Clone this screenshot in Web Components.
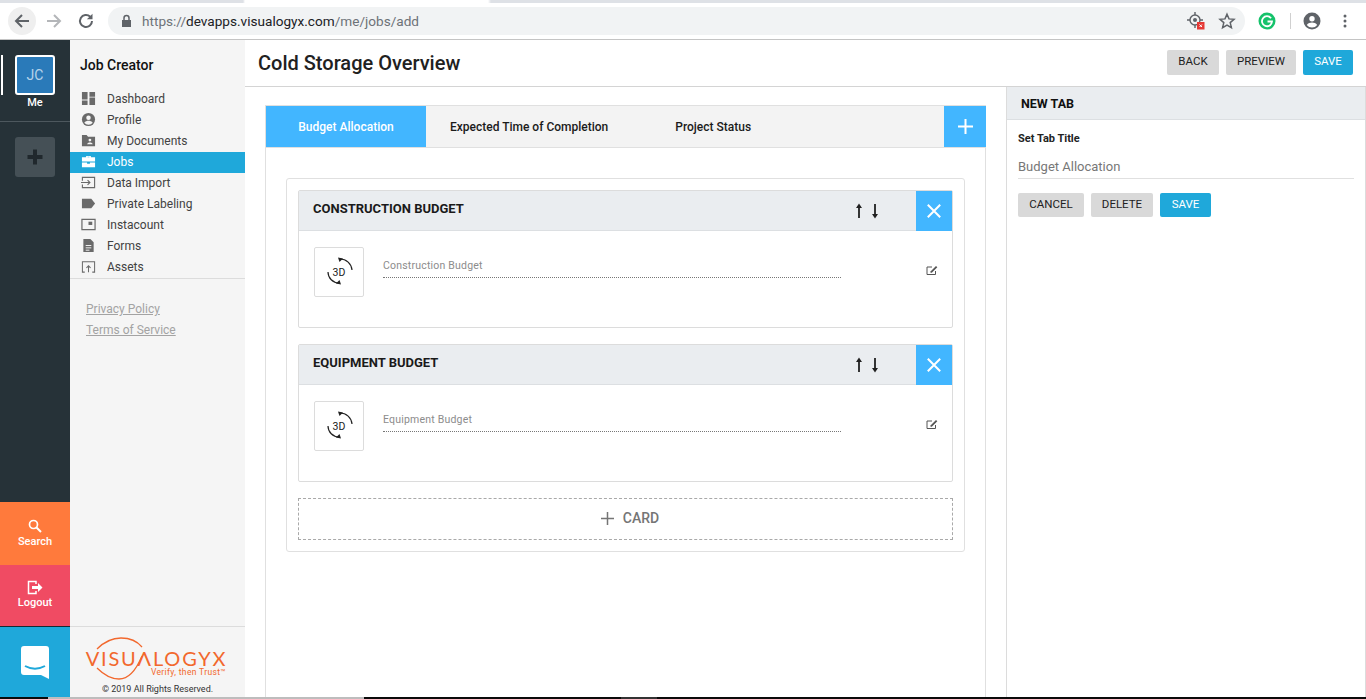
<!DOCTYPE html>
<html>
<head>
<meta charset="utf-8">
<title>Cold Storage Overview</title>
<style>
  html, body { margin: 0; height: 100%; overflow: hidden; background: #fff; }
  body { font-family: Roboto, "Liberation Sans", sans-serif; display: flex; flex-direction: column; height: 699px; }
  .app { display: flex; flex: 1; min-height: 0; }
  .work { flex: 1; display: flex; flex-direction: column; min-width: 0; }
  .columns { flex: 1; display: flex; min-height: 0; }
</style>
</head>
<body>
  <browser-bar></browser-bar>
  <div class="app">
    <app-rail></app-rail>
    <side-nav></side-nav>
    <div class="work">
      <page-header></page-header>
      <div class="columns">
        <tab-panel>
          <form-card title="CONSTRUCTION BUDGET" label="Construction Budget"></form-card>
          <form-card title="EQUIPMENT BUDGET" label="Equipment Budget"></form-card>
        </tab-panel>
        <tab-editor></tab-editor>
      </div>
    </div>
  </div>
  <task-strip></task-strip>

<script>
class uiButton extends HTMLElement {
  constructor(){
    super();
    this.attachShadow({mode:"open"});
    this.shadowRoot.innerHTML = `
      <style>
      :host { display: inline-flex; align-items: center; justify-content: center; box-sizing: border-box;
        height: 25px; background: #d9d9d9; color: #212121; border-radius: 2px;
        font-size: 11.5px; line-height: 1; padding-bottom: 2px; }
      :host([primary]) { background: #1fa8da; color: #fff; }
      :host([small]) { height: 24px; padding-bottom: 0; }
      </style>
      <slot></slot>`;
  }
}
customElements.define("ui-button", uiButton);

class browserBar extends HTMLElement {
  constructor(){
    super();
    this.attachShadow({mode:"open"});
    this.shadowRoot.innerHTML = `
      <style>
      :host { display: block; flex: none; height: 40px; box-sizing: border-box; border-bottom: 1px solid #c4c4c4; background: #fff; }
      .strip { height: 3px; background: linear-gradient(to right, #dee1e6 0, #dee1e6 243px, #fff 245px, #fff 488px, #dee1e6 491px); }
      .row { display: flex; align-items: center; height: 28px; margin-top: 4px; padding-left: 8px; }
      .back { width: 28px; height: 28px; border-radius: 50%; background: #efefef; display: flex; align-items: center; justify-content: center; }
      .nav { width: 32px; display: flex; justify-content: center; }
      .omni { margin-left: 6px; width: 1137px; height: 28px; border-radius: 14px; background: #f1f3f4; display: flex; align-items: center; box-sizing: border-box; padding-left: 12px; }
      .url { margin-left: 9px; font-size: 13.6px; color: #6d7278; flex: 1; white-space: nowrap; }
      .url b { font-weight: 400; color: #202124; }
      .end { display: flex; align-items: center; }
      .sep { width: 1px; height: 16px; background: #d0d0d0; margin: 0 12px 0 14px; }
      </style>
      <div class="strip"></div>
      <div class="row">
        <div class="back"><svg width="18" height="18" viewBox="0 0 18 18"><path d="M16 9H3.500M9 3L3 9l6 6" fill="none" stroke="#5f6368" stroke-width="2"/></svg></div>
        <div class="nav" style="margin-left:2px"><svg width="18" height="18" viewBox="0 0 18 18"><path d="M2 9h12.500M9 3l6 6-6 6" fill="none" stroke="#b4b6b9" stroke-width="2"/></svg></div>
        <div class="nav"><svg width="18" height="18" viewBox="0 0 18 18"><path d="M15 9a6 6 0 1 1-1.800-4.300" fill="none" stroke="#5f6368" stroke-width="2"/><path d="M15.500 1.700v5.600H9.900z" fill="#5f6368"/></svg></div>
        <div class="omni">
          <svg width="13" height="14" viewBox="0 0 13 14"><path d="M2 6h9v7H2z" fill="#5f6368"/><path d="M4 6V4a2.500 2.500 0 0 1 5 0v2" fill="none" stroke="#5f6368" stroke-width="1.500"/></svg>
          <div class="url">https://<b>devapps.visualogyx.com</b>/me/jobs/add</div>
          <svg width="18" height="18" viewBox="0 0 18 18" style="margin-right:13px"><circle cx="8" cy="8" r="5" fill="none" stroke="#5f6368" stroke-width="1.400"/><circle cx="8" cy="8" r="2" fill="#5f6368"/><path d="M8 0v3M8 13v3M0 8h3M13 8h3" stroke="#5f6368" stroke-width="1.400"/><rect x="10" y="10" width="7.500" height="7.500" fill="#e53935"/><path d="M12.500 12.500l2.500 2.500M15 12.500L12.500 15" stroke="#fff" stroke-width="1"/></svg>
          <svg width="18" height="18" viewBox="0 0 18 18" style="margin-right:9px"><path d="M9 2.200l2 4.700 5 .4-3.800 3.300 1.200 5L9 13l-4.400 2.600 1.200-5L2 7.300l5-.4z" fill="none" stroke="#5f6368" stroke-width="1.500"/></svg>
        </div>
        <div class="end">
          <svg width="18" height="18" viewBox="0 0 18 18" style="margin-left:13px"><circle cx="9" cy="9" r="8.500" fill="#15c26b"/><path d="M13 6.200A5 5 0 1 0 14 9.500H9.500" fill="none" stroke="#fff" stroke-width="1.800"/></svg>
          <div class="sep"></div>
          <svg width="18" height="18" viewBox="0 0 18 18"><circle cx="9" cy="9" r="8.500" fill="#5f6368"/><circle cx="9" cy="6.800" r="2.700" fill="#fff"/><path d="M3.800 13c1.200-2 3.300-2.600 5.200-2.600s4 .6 5.200 2.600a6.500 6.500 0 0 1-10.400 0z" fill="#fff"/></svg>
          <svg width="4" height="14" viewBox="0 0 4 14" style="margin-left:22px"><circle cx="2" cy="2" r="1.500" fill="#5f6368"/><circle cx="2" cy="7" r="1.500" fill="#5f6368"/><circle cx="2" cy="12" r="1.500" fill="#5f6368"/></svg>
        </div>
      </div>`;
  }
}
customElements.define("browser-bar", browserBar);

class appRail extends HTMLElement {
  constructor(){
    super();
    this.attachShadow({mode:"open"});
    this.shadowRoot.innerHTML = `
      <style>
      :host { display: flex; flex-direction: column; flex: none; width: 70px; background: #263238; color: #fff; font-size: 11px; font-weight: 500; text-align: center; }
      .me { height: 82px; box-sizing: border-box; padding-top: 15px; border-bottom: 1px solid #4d585e; position: relative; }
      .me::before { content: ""; position: absolute; left: 1px; top: 15px; width: 2px; height: 40px; background: #fff; }
      .avatar { width: 40px; height: 40px; box-sizing: border-box; margin: 0 auto; border: 2px solid #fff; border-radius: 3px; background: #2a7ab9; color: #b6d3ea; font-size: 14px; font-weight: 400; display: flex; align-items: center; justify-content: center; }
      .name { margin-top: 1px; line-height: 13px; }
      .add { width: 40px; height: 40px; margin: 15px auto 0; border-radius: 3px; background: #455056; display: flex; align-items: center; justify-content: center; }
      .grow { flex: 1; }
      .block { display: flex; flex-direction: column; align-items: center; }
      .search { height: 63px; background: #ff7a3c; padding-top: 17px; box-sizing: border-box; }
      .logout { height: 61px; background: #f04b63; padding-top: 15px; box-sizing: border-box; }
      .chat { height: 71px; background: #1fa8da; border-top: 1px solid #172a33; box-sizing: border-box; align-items: center; justify-content: center; }
      span { line-height: 14px; }
      </style>
      <div class="me">
        <div class="avatar">JC</div>
        <div class="name">Me</div>
      </div>
      <div class="add"><svg width="16" height="16" viewBox="0 0 16 16"><path d="M8 .5v15M.5 8h15" stroke="#20282d" stroke-width="4"/></svg></div>
      <div class="grow"></div>
      <div class="block search">
        <svg width="14" height="14" viewBox="0 0 14 14"><circle cx="5.500" cy="5.500" r="4" fill="none" stroke="#fff" stroke-width="1.700"/><path d="M8.500 8.500l4.500 4.500" stroke="#fff" stroke-width="2"/></svg>
        <span style="margin-top:2px">Search</span>
      </div>
      <div class="block logout">
        <svg width="16" height="15" viewBox="0 0 16 15"><path d="M9 4V1.500H1.500v12H9V11" fill="none" stroke="#fff" stroke-width="1.500"/><path d="M5 6h6V3l4.500 4.500L11 12V9H5z" fill="#fff"/></svg>
        <span style="margin-top:1px">Logout</span>
      </div>
      <div class="block chat">
        <svg width="28" height="33" viewBox="0 0 28 33"><path d="M3 0h22a3 3 0 0 1 3 3v30l-8-4H3a3 3 0 0 1-3-3V3a3 3 0 0 1 3-3z" fill="#fff"/><path d="M4 20c6 3.500 14 3.500 20 0" fill="none" stroke="#1fa8da" stroke-width="2"/></svg>
      </div>`;
  }
}
customElements.define("app-rail", appRail);

const navIcons = {
  dashboard: `<path d="M1 1h6v8H1zM1 10h6v5H1zM9 1h6v5H9zM9 7h6v8H9z" fill="currentColor"/>`,
  profile: `<circle cx="8" cy="8" r="7" fill="currentColor"/><circle cx="8" cy="6" r="2.400" fill="#f5f5f5"/><path d="M3.500 11.500c1-1.700 3-2.200 4.500-2.200s3.500.5 4.500 2.200a5.800 5.800 0 0 1-9 0z" fill="#f5f5f5"/>`,
  docs: `<path d="M1 2h5l1.500 2H15v10H1z" fill="currentColor"/><circle cx="9.500" cy="7.500" r="1.500" fill="#f5f5f5"/><path d="M6.500 12c.3-1.500 1.500-2 3-2s2.700.5 3 2z" fill="#f5f5f5"/>`,
  jobs: `<path d="M5.500 3.500V2h5v1.500H15V8H1V3.500zM7 3.500h2V3H7zM1 9h5.500v1.500h3V9H15v5H1z" fill="currentColor"/>`,
  data: `<path d="M1.500 6V2.500h13v11h-13V10" fill="none" stroke="currentColor" stroke-width="1.200"/><path d="M0 8h9M7 5.500L9.500 8 7 10.500" fill="none" stroke="currentColor" stroke-width="1.200"/>`,
  label: `<path d="M1 3h10l4 5-4 5H1z" fill="currentColor"/>`,
  insta: `<path d="M1 2.500h14v11H1z" fill="none" stroke="currentColor" stroke-width="1.300"/><rect x="8" y="5" width="4" height="3.500" fill="currentColor"/>`,
  forms: `<path d="M2.500 1H10l3.500 3.500V15h-11z" fill="currentColor"/><path d="M5 8h6M5 10.500h6M5 13h4" stroke="#f5f5f5" stroke-width="1"/>`,
  assets: `<path d="M4 14H1.500V3h13v11H12" fill="none" stroke="currentColor" stroke-width="1.100"/><path d="M8 14V7.500M5.800 9.500L8 7.300l2.200 2.200" fill="none" stroke="currentColor" stroke-width="1.100"/>`
};

class navItem extends HTMLElement {
  constructor(){
    super();
    this.attachShadow({mode:"open"});
  }
  connectedCallback(){
    this.shadowRoot.innerHTML = `
      <style>
      :host { display: flex; align-items: center; height: 21px; box-sizing: border-box; padding: 0 0 2px 11px; color: #424242; font-size: 12px; }
      :host([active]) { background: #1fa8da; color: #fff; }
      svg { flex: none; color: #6a6a6a; }
      :host([active]) svg { color: #fff; }
      span { margin-left: 11px; }
      </style>
      <svg width="15" height="15" viewBox="0 0 16 16">${navIcons[this.getAttribute("icon")]}</svg>
      <span><slot></slot></span>`;
  }
}
customElements.define("nav-item", navItem);

class sideNav extends HTMLElement {
  constructor(){
    super();
    this.attachShadow({mode:"open"});
    this.shadowRoot.innerHTML = `
      <style>
      :host { display: flex; flex-direction: column; flex: none; width: 175px; background: #f5f5f5; }
      h2 { margin: 0; padding: 17px 0 0 10px; height: 32px; font-size: 14px; line-height: 16px; font-weight: 500; color: #111; box-sizing: content-box; }
      .items { border-bottom: 1px solid #dcdcdc; }
      .legal { padding: 20px 0 0 16px; flex: 1; }
      .legal a { display: block; font-size: 12px; line-height: 21px; color: #a3a3a3; text-decoration: underline; }
      .foot { height: 71px; box-sizing: border-box; border-top: 1px solid #dcdcdc; display: flex; flex-direction: column; align-items: center; }
      .logo { position: relative; height: 53px; width: 145px; margin-top: 9px; }
      .logo svg { position: absolute; left: 0; top: 0; }
      .word { position: absolute; left: -1px; top: 12px; width: 145px; text-align: center; font-family: Lato, sans-serif; font-size: 20px; line-height: 20px; font-weight: 400; color: #f2682d; letter-spacing: 1.800px; white-space: nowrap; }
      .tag { position: absolute; right: 4px; top: 32px; font-size: 8.500px; letter-spacing: .35px; line-height: 8px; color: #f2682d; white-space: nowrap; }
      .copy { font-size: 9px; line-height: 12px; color: #333; margin-top: -6px; white-space: nowrap; }
      </style>
      <h2>Job Creator</h2>
      <div class="items">
        <nav-item icon="dashboard">Dashboard</nav-item>
        <nav-item icon="profile">Profile</nav-item>
        <nav-item icon="docs">My Documents</nav-item>
        <nav-item icon="jobs" active>Jobs</nav-item>
        <nav-item icon="data">Data Import</nav-item>
        <nav-item icon="label">Private Labeling</nav-item>
        <nav-item icon="insta">Instacount</nav-item>
        <nav-item icon="forms">Forms</nav-item>
        <nav-item icon="assets">Assets</nav-item>
      </div>
      <div class="legal">
        <a>Privacy Policy</a>
        <a>Terms of Service</a>
      </div>
      <div class="foot">
        <div class="logo">
          <svg width="145" height="45" viewBox="0 0 145 45"><path d="M12 13C20 5 28 2 36 2C44 2 52 5 57 11M12 32C20 40 28 43 34 43C44 43 52 32 57 20" fill="none" stroke="#f2682d" stroke-width="1.300"/></svg>
          <div class="word">VISUΛLOGYX</div>
          <div class="tag">Verify, then Trust™</div>
        </div>
        <div class="copy">© 2019 All Rights Reserved.</div>
      </div>`;
  }
}
customElements.define("side-nav", sideNav);

class pageHeader extends HTMLElement {
  constructor(){
    super();
    this.attachShadow({mode:"open"});
    this.shadowRoot.innerHTML = `
      <style>
      :host { display: flex; align-items: center; flex: none; height: 47px; box-sizing: border-box; border-bottom: 1px solid #d4d4d4; padding: 0 13px 1px; background: #fff; }
      h1 { margin: 0 auto 0 0; font-size: 20px; font-weight: 500; color: #212121; }
      ui-button + ui-button { margin-left: 7px; }
      </style>
      <h1>Cold Storage Overview</h1>
      <ui-button style="width:52px">BACK</ui-button>
      <ui-button style="width:70px">PREVIEW</ui-button>
      <ui-button primary style="width:50px">SAVE</ui-button>`;
  }
}
customElements.define("page-header", pageHeader);

class tabPanel extends HTMLElement {
  constructor(){
    super();
    this.attachShadow({mode:"open"});
    this.shadowRoot.innerHTML = `
      <style>
      :host { display: block; flex: 1; min-width: 0; box-sizing: border-box; padding: 18px 20px 0; }
      .panel { height: 100%; box-sizing: border-box; border: 1px solid #e0e0e0; border-bottom: 0; margin-bottom: -20px; }
      .tabs { display: flex; align-items: stretch; height: 42px; box-sizing: border-box; background: #f3f3f3; border-bottom: 1px solid #e0e0e0; font-size: 12px; font-weight: 500; color: #1b1b1b; margin-right: -1px; }
      .tab { display: flex; align-items: center; justify-content: center; }
      .tab.on { width: 160px; background: #42b6ff; color: #fff; }
      .add { margin-left: auto; width: 42px; background: #42b6ff; display: flex; align-items: center; justify-content: center; }
      .sheet { margin: 30px 20px 0 20px; border: 1px solid #e0e0e0; border-radius: 3px; padding: 11px; display: flex; flex-direction: column; gap: 16px; }
      .more { height: 42px; box-sizing: border-box; border: 1px dashed #a9a9a9; display: flex; align-items: center; justify-content: center; color: #757575; font-size: 14px; font-weight: 500; gap: 9px; padding: 0 0 2px 9px; }
      </style>
      <div class="panel">
        <div class="tabs">
          <div class="tab on">Budget Allocation</div>
          <div class="tab" style="margin-left:24px">Expected Time of Completion</div>
          <div class="tab" style="margin-left:67px">Project Status</div>
          <div class="add"><svg width="15" height="15" viewBox="0 0 15 15"><path d="M7.500 0v15M0 7.500h15" stroke="#fff" stroke-width="2"/></svg></div>
        </div>
        <div class="sheet">
          <slot></slot>
          <div class="more"><svg width="13" height="13" viewBox="0 0 13 13"><path d="M6.500 0v13M0 6.500h13" stroke="#757575" stroke-width="1.500"/></svg>CARD</div>
        </div>
      </div>`;
  }
}
customElements.define("tab-panel", tabPanel);

class formCard extends HTMLElement {
  constructor(){
    super();
    this.attachShadow({mode:"open"});
  }
  connectedCallback(){
    this.shadowRoot.innerHTML = `
      <style>
      :host { display: block; height: 138px; box-sizing: border-box; border: 1px solid #dcdcdc; border-radius: 2px; }
      .head { display: flex; align-items: center; height: 40px; box-sizing: border-box; background: #eaedf0; border-bottom: 1px solid #dcdfe2; }
      .title { flex: 1; padding-left: 14px; font-size: 13px; font-weight: 700; color: #1a1a1a; position: relative; top: -2px; }
      .move { display: flex; gap: 6px; margin-right: 36px; }
      .close { width: 36px; height: 40px; background: #42b6ff; display: flex; align-items: center; justify-content: center; align-self: flex-start; }
      .body { display: flex; padding: 16px 0 0 15px; }
      .thumb { width: 50px; height: 50px; box-sizing: border-box; border: 1px solid #dcdcdc; border-radius: 2px; display: flex; align-items: center; justify-content: center; position: relative; }
      .thumb span { font-size: 10.500px; color: #222; }
      .thumb svg { position: absolute; left: 10px; top: 9px; }
      .field { margin-left: 19px; width: 458px; height: 31px; box-sizing: border-box; border-bottom: 1px dotted #777; font-size: 10.500px; line-height: 12px; letter-spacing: .2px; color: #8c8c8c; padding-top: 13px; }
      .edit { margin: 17px 0 0 85px; }
      </style>
      <div class="head">
        <div class="title">${this.getAttribute("title")}</div>
        <div class="move">
          <svg width="10" height="16" viewBox="0 0 10 16"><path d="M5 15V3" stroke="#212121" stroke-width="1.800"/><path d="M5 .5L8 5H2z" fill="#212121"/></svg>
          <svg width="10" height="16" viewBox="0 0 10 16"><path d="M5 1v12" stroke="#212121" stroke-width="1.800"/><path d="M5 15.500L8 11H2z" fill="#212121"/></svg>
        </div>
        <div class="close"><svg width="14" height="14" viewBox="0 0 14 14"><path d="M.8.8l12.400 12.400M13.200.8L.8 13.200" stroke="#fff" stroke-width="2"/></svg></div>
      </div>
      <div class="body">
        <div class="thumb">
          <svg width="30" height="30" viewBox="0 0 30 30"><path d="M15 2a12 12 0 0 1 12 11" fill="none" stroke="#222" stroke-width="1.200"/><path d="M13 .5l5 1-3.500 3.500z" fill="#222"/><path d="M3 15a11 11 0 0 0 11 11" fill="none" stroke="#222" stroke-width="1.200"/><path d="M16 27.500l-5-1 3.500-3.500z" fill="#222"/></svg>
          <span>3D</span>
        </div>
        <div class="field">${this.getAttribute("label")}</div>
        <svg class="edit" width="12" height="12" viewBox="0 0 12 12"><path d="M9.500 7V10.500H1V3H6" fill="none" stroke="#555" stroke-width="1"/><path d="M4.500 7.500L10 2l1.300 1.300L5.800 8.800H4.500z" fill="#555"/></svg>
      </div>`;
  }
}
customElements.define("form-card", formCard);

class tabEditor extends HTMLElement {
  constructor(){
    super();
    this.attachShadow({mode:"open"});
    this.shadowRoot.innerHTML = `
      <style>
      :host { display: block; flex: none; width: 360px; box-sizing: border-box; border-left: 1px solid #dcdcdc; border-right: 1px solid #dcdcdc; }
      .head { height: 33px; box-sizing: border-box; background: #eaedf0; border-bottom: 1px solid #dcdfe2; padding-left: 14px; font-size: 12.500px; font-weight: 700; line-height: 33px; color: #111; }
      .body { padding: 12px 11px 0; }
      label { display: block; font-size: 11px; line-height: 13px; font-weight: 700; color: #222; }
      .input { margin-top: 12px; height: 22px; box-sizing: border-box; border-bottom: 1px solid #e0e0e0; font-size: 13px; line-height: 16px; color: #777; padding-top: 2px; }
      .actions { display: flex; gap: 7px; margin-top: 14px; }
      </style>
      <div class="head">NEW TAB</div>
      <div class="body">
        <label>Set Tab Title</label>
        <div class="input">Budget Allocation</div>
        <div class="actions">
          <ui-button small style="width:66px">CANCEL</ui-button>
          <ui-button small style="width:62px">DELETE</ui-button>
          <ui-button small primary style="width:51px">SAVE</ui-button>
        </div>
      </div>`;
  }
}
customElements.define("tab-editor", tabEditor);

class taskStrip extends HTMLElement {
  constructor(){
    super();
    this.attachShadow({mode:"open"});
    this.shadowRoot.innerHTML = `
      <style>
      :host { display: flex; flex: none; height: 2px; background: #0a0a0a; }
      .gap { width: 364px; background: #bdbdbd; }
      .gap::before { content: ""; display: block; width: 48px; height: 100%; background: #0a0a0a; }
      .app { width: 36px; margin-left: 257px; background: #333; }
      </style>
      <div class="gap"></div>
      <div class="app"></div>`;
  }
}
customElements.define("task-strip", taskStrip);
</script>
</body>
</html>
